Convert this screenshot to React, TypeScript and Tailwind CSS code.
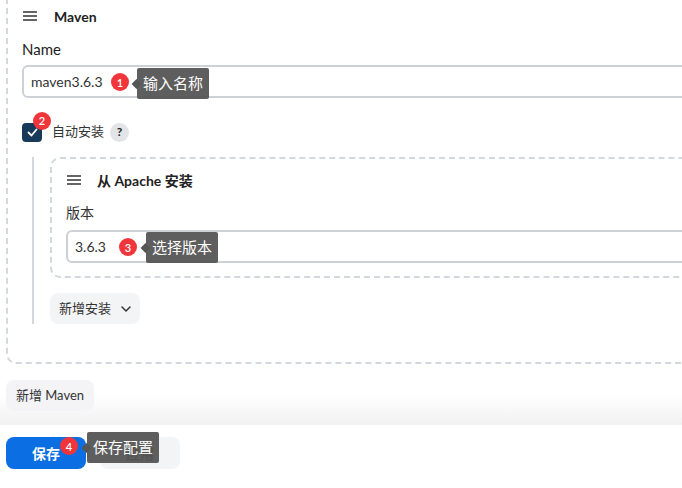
import React from "react";

function Burger() {
  return (
    <svg width="14" height="10" viewBox="0 0 14 10" fill="none" className="text-[#333]">
      <path d="M0 1h14M0 5h14M0 9h14" stroke="currentColor" strokeWidth="1.5" />
    </svg>
  );
}

function Badge({ n }: { n: number }) {
  return (
    <span className="flex h-[18px] w-[18px] items-center justify-center rounded-full bg-[#f0353b] text-[11px] font-semibold leading-none text-white">
      {n}
    </span>
  );
}

function Tip({ text }: { text: string }) {
  return (
    <span className="relative flex h-[31px] items-center rounded-[2px] bg-[#555555]/95 px-[6px] text-[15px] text-white">
      <span className="absolute -left-[4px] top-1/2 h-[7px] w-[7px] -translate-y-1/2 rotate-45 bg-[#555555]" />
      <span className="relative">{text}</span>
    </span>
  );
}

export default function App() {
  return (
    <div
      className="relative h-[488px] w-[682px] overflow-hidden bg-white text-[14px] text-[#222]"
      style={{ fontFamily: 'Lato,"Noto Sans CJK SC",sans-serif' }}
    >
      {/* maven 安装卡片 */}
      <div className="ml-[6px] -mt-[12px] w-[720px] rounded-[10px] border-2 border-dashed border-[#d3d8de] pl-[14px] pt-[16px] pb-[38px]">
        <div className="flex h-[20px] items-center">
          <span className="ml-[1px]"><Burger /></span>
          <span className="ml-[17px] font-bold">Maven</span>
        </div>
        <div className="mt-[13px] h-[20px] text-[15px] leading-[20px]">Name</div>
        <div className="relative mt-[6px] flex h-[33px] items-center rounded-[6px] border-2 border-[#ccd1d7] pl-[7px] text-[14px] text-[#333]">
          maven3.6.3
          <span className="absolute left-[87px] top-[6px]"><Badge n={1} /></span>
          <span className="absolute left-[113px] top-[1px]"><Tip text="输入名称" /></span>
        </div>

        <div className="mt-[24px] flex h-[20px] items-center">
          <span className="relative flex h-[19px] w-[20px] items-center justify-center rounded-[4px] bg-[#173a5a]">
            <svg width="11" height="9" viewBox="0 0 11 9" fill="none">
              <path d="M1.5 4.5l3 3 5-6" stroke="white" strokeWidth="1.8" strokeLinecap="round" strokeLinejoin="round" />
            </svg>
            <span className="absolute left-[11px] -top-[11px]"><Badge n={2} /></span>
          </span>
          <span className="ml-[10px] text-[13px] text-[#333]">自动安装</span>
          <span className="ml-[6px] flex h-[19px] w-[19px] items-center justify-center rounded-full bg-[#e3e4e8] text-[12px] font-bold text-[#222]">?</span>
        </div>

        {/* 安装器 */}
        <div className="ml-[10px] mt-[15px] border-l-2 border-[#d4d8de] pl-[16px]">
          <div className="rounded-[10px] border-2 border-dashed border-[#d3d8de] pl-[14px] pt-[11px] pb-[13px]">
            <div className="flex h-[20px] items-center">
              <span className="ml-[1px]"><Burger /></span>
              <span className="ml-[16px] font-bold">从 Apache 安装</span>
            </div>
            <div className="mt-[13px] h-[20px] leading-[20px] text-[#333]">版本</div>
            <div className="relative mt-[7px] flex h-[33px] items-center rounded-[6px] border-2 border-[#ccd1d7] pl-[7px] text-[14px] text-[#333]">
              3.6.3
              <span className="absolute left-[51px] top-[6px]"><Badge n={3} /></span>
              <span className="absolute left-[78px] top-[0px]"><Tip text="选择版本" /></span>
            </div>
          </div>
          <button className="mt-[15px] flex h-[31px] w-[90px] items-center justify-center gap-[10px] rounded-[8px] bg-[#f3f4f6] text-[13px] text-[#333]">
            新增安装
            <svg width="10" height="6" viewBox="0 0 10 6" fill="none">
              <path d="M1 1l4 4 4-4" stroke="#333" strokeWidth="1.5" strokeLinecap="round" strokeLinejoin="round" />
            </svg>
          </button>
        </div>
      </div>

      <div className="h-[61px] bg-[linear-gradient(to_bottom,#ffffff_0%,#ffffff_50%,#f1f1f2_100%)] pt-[16px]">
        <button className="ml-[6px] h-[31px] w-[88px] rounded-[8px] bg-[#f4f4f6] text-[13px] text-[#333]">新增 Maven</button>
      </div>

      {/* 底部按钮 */}
      <div className="flex items-start bg-white pt-[12px] pl-[6px]">
        <div className="relative flex">
          <button className="h-[32px] w-[80px] rounded-[8px] bg-[#0b6ee3] text-[14px] font-bold text-white">保存</button>
          <button className="ml-[14px] h-[32px] w-[80px] rounded-[8px] bg-[#f3f4f6] text-[14px] font-bold text-[#333]">应用</button>
          <span className="absolute left-[54px] top-[0px]"><Badge n={4} /></span>
          <span className="absolute left-[81px] -top-[5px]"><Tip text="保存配置" /></span>
        </div>
      </div>
    </div>
  );
}
